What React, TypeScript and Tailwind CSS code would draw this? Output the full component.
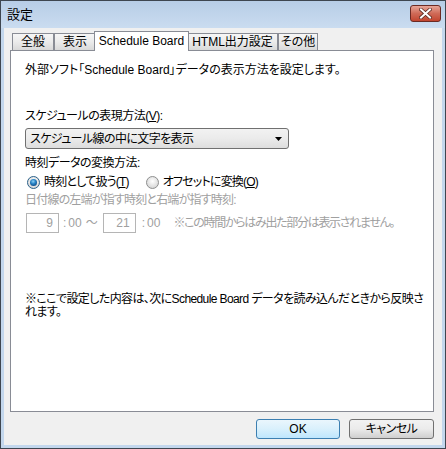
import type { ReactNode } from "react"

const tabs = [
  { label: "全般", w: "w-[42px]" },
  { label: "表示", w: "w-[42px]" },
  { label: "Schedule Board", w: "w-[95px]", active: true },
  { label: "HTML出力設定", w: "w-[91px]" },
  { label: "その他", w: "w-[40px]" },
]

function Tab({ label, w, active }: { label: string; w: string; active?: boolean }) {
  if (active) {
    return (
      <div
        className={`relative z-10 -mx-[2px] flex h-[20px] ${w} items-start justify-center border border-b-0 border-[#898c95] bg-white pt-[2px] leading-[14px]`}
      >
        {label}
      </div>
    )
  }
  return (
    <div
      className={`mb-[1px] flex h-[17px] ${w} items-center justify-center border border-b-0 border-[#898c95] bg-gradient-to-b from-[#f6f6f6] via-[#ebebeb] to-[#d9d9d9] leading-[14px]`}
    >
      {label}
    </div>
  )
}

function Radio({ checked, children }: { checked?: boolean; children: ReactNode }) {
  return (
    <label className="flex items-center gap-[4px]">
      <svg width="13" height="13" viewBox="0 0 13 13">
        <defs>
          <radialGradient id="rbg" cx="50%" cy="40%" r="60%">
            <stop offset="0" stopColor="#ffffff" />
            <stop offset="1" stopColor="#d4d4d4" />
          </radialGradient>
          <radialGradient id="rdot" cx="45%" cy="35%" r="65%">
            <stop offset="0" stopColor="#8ed0f5" />
            <stop offset="0.5" stopColor="#2a86c8" />
            <stop offset="1" stopColor="#0f4f8c" />
          </radialGradient>
        </defs>
        <circle cx="6.5" cy="6.5" r="6" fill="url(#rbg)" stroke={checked ? "#2c628b" : "#8e8f8f"} />
        {checked && <circle cx="6.5" cy="6.5" r="3.5" fill="url(#rdot)" />}
      </svg>
      <span className="tracking-[-0.8px]">{children}</span>
    </label>
  )
}

function WinButton({ children, primary }: { children: ReactNode; primary?: boolean }) {
  return (
    <button
      className={`flex h-[20px] items-center justify-center rounded-[3px] border leading-[14px] ${
        primary
          ? "w-[84px] border-[#3c7fb1] bg-gradient-to-b from-[#eaf6fd] via-[#d9f0fc] to-[#bee6fd]"
          : "w-[85px] border-[#707070] bg-gradient-to-b from-[#f2f2f2] via-[#ebebeb] to-[#cfcfcf] tracking-[-0.5px]"
      }`}
    >
      {children}
    </button>
  )
}

export default function App() {
  return (
    <div className="flex h-[449px] w-[446px] flex-col border border-[#3e4650] bg-[#c3d7ed] font-['Liberation_Sans','Noto_Sans_CJK_JP',sans-serif] text-[12px] text-black [font-feature-settings:'palt']">
      {/* title bar */}
      <div className="flex h-[27px] items-center justify-between bg-gradient-to-b from-[#b7cde6] to-[#cadcf0] pl-[6px] pr-[4px]">
        <span className="text-[13px] leading-[16px]">設定</span>
        <div className="mb-[2px] flex h-[17px] w-[31px] items-center justify-center rounded-[3px] border border-[#6b2a23] bg-gradient-to-b from-[#e6a598] via-[#cf6a57] to-[#c2452f]">
          <svg width="13" height="11" viewBox="0 0 13 11">
            <path d="M2 1.5 L11 9.5 M11 1.5 L2 9.5" stroke="#5a2a22" strokeWidth="3.6" strokeLinecap="square" />
            <path d="M2 1.5 L11 9.5 M11 1.5 L2 9.5" stroke="#ffffff" strokeWidth="2" strokeLinecap="square" />
          </svg>
        </div>
      </div>

      {/* client area */}
      <div className="mx-[3px] mb-[3px] flex flex-1 flex-col bg-[#f0f0f0]">
        <div className="ml-[6px] mt-[3px] w-[424px]">
          <div className="relative z-10 flex h-[20px] items-end pl-[2px]">
            {tabs.map((t) => (
              <Tab key={t.label} {...t} />
            ))}
          </div>
          <div className="-mt-px flex h-[362px] flex-col border border-[#898c95] bg-white pl-[14px]">
            <div className="mt-[12px] h-[14px] leading-[14px]">
              外部ソフト「Schedule Board」データの表示方法を設定します。
            </div>

            <div className="mt-[32px] h-[14px] leading-[14px] tracking-[-0.5px]">
              スケジュールの表現方法(<u>V</u>):
            </div>
            <div className="mt-[5px] flex h-[21px] w-[264px] items-center justify-between rounded-[3px] border border-[#707070] bg-gradient-to-b from-[#f2f2f2] via-[#ebebeb] to-[#dddddd] pl-[4px] pr-[6px] leading-[14px]">
              <span className="tracking-[-0.6px]">スケジュール線の中に文字を表示</span>
              <svg width="7" height="4" viewBox="0 0 7 4">
                <path d="M0 0 H7 L3.5 4 Z" fill="#000" />
              </svg>
            </div>

            <div className="mt-[7px] h-[14px] leading-[14px] tracking-[-0.5px]">時刻データの変換方法:</div>
            <div className="mt-[5px] flex h-[14px] items-center gap-[17px] pl-[2px] leading-[14px]">
              <Radio checked>
                時刻として扱う(<u>T</u>)
              </Radio>
              <Radio>
                オフセットに変換(<u>O</u>)
              </Radio>
            </div>

            <div className="mt-[4px] h-[14px] leading-[14px] tracking-[-0.8px] text-[#a0a0a0]">
              日付線の左端が指す時刻と右端が指す時刻:
            </div>
            <div className="mt-[6px] flex h-[20px] items-center pl-[1px] leading-[14px] text-[#a0a0a0]">
              <div className="flex h-[20px] w-[33px] items-center justify-end border border-[#b5b5b5] pr-[5px]">9</div>
              <span className="ml-[4px]">:</span>
              <span className="ml-[2px]">00</span>
              <span className="ml-[4px]">～</span>
              <div className="ml-[5px] flex h-[20px] w-[33px] items-center justify-end border border-[#b5b5b5] pr-[5px]">21</div>
              <span className="ml-[6px]">:</span>
              <span className="ml-[2px]">00</span>
              <span className="ml-[13px] tracking-[-1.3px]">※この時間からはみ出た部分は表示されません。</span>
            </div>

            <div className="mt-[60px] w-[400px] leading-[13px] tracking-[-0.6px]">
              ※ここで設定した内容は、次にSchedule Board データを読み込んだときから反映されます。
            </div>
          </div>
        </div>

        <div className="mt-[7px] flex w-[430px] justify-end gap-[9px]">
          <WinButton primary>OK</WinButton>
          <WinButton>キャンセル</WinButton>
        </div>
      </div>
    </div>
  )
}
